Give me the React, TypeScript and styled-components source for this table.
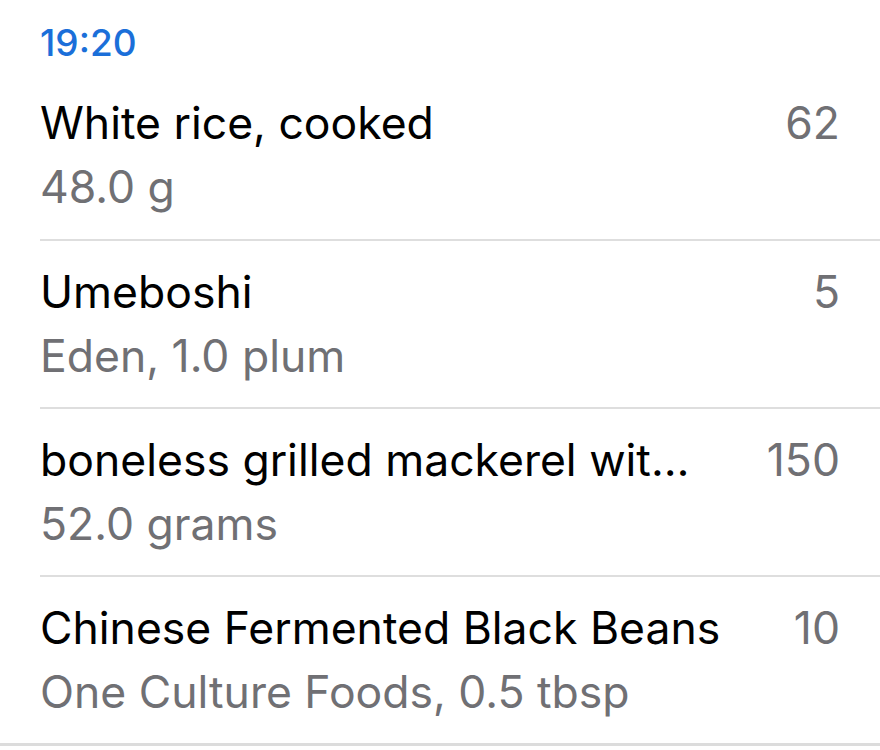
import React from "react";
import styled, { createGlobalStyle } from "styled-components";

const Global = createGlobalStyle`
  html, body { margin: 0; padding: 0; background: #ffffff; }
  body { font-family: Inter, "Noto Sans", "Liberation Sans", sans-serif; -webkit-font-smoothing: antialiased; }
`;

const Screen = styled.div`
  width: 880px;
  height: 750px;
  overflow: hidden;
  background: #ffffff;
  display: flex;
  flex-direction: column;
`;

const Section = styled.section`
  display: flex;
  flex-direction: column;
  border-bottom: 3px solid #dcdcdc;
`;

const Time = styled.div`
  padding: 21px 40px 32px;
  font-size: 37px;
  line-height: 44px;
  font-weight: 500;
  color: #1b6fd9;
`;

const List = styled.ul`
  list-style: none;
  margin: 0;
  padding: 0 0 0 40px;
`;

const Row = styled.li<{ $first?: boolean; $last?: boolean }>`
  display: flex;
  align-items: flex-start;
  justify-content: space-between;
  gap: 72px;
  padding: ${(p) => (p.$first ? "0" : "25px")} 40px ${(p) => (p.$first ? "26px" : "25px")} 0;
  border-bottom: ${(p) => (p.$last ? "none" : "2px solid #dedede")};
`;

const Info = styled.div`
  display: flex;
  flex-direction: column;
  gap: 12px;
  min-width: 0;
`;

const Title = styled.div`
  font-size: 44.5px;
  line-height: 52px;
  color: #000000;
  white-space: nowrap;
  overflow: hidden;
  text-overflow: ellipsis;
`;

const Detail = styled.div`
  font-size: 44.5px;
  line-height: 52px;
  color: #707074;
  white-space: nowrap;
`;

const Calories = styled.div`
  font-size: 44.5px;
  line-height: 52px;
  color: #707074;
  flex-shrink: 0;
`;

type Entry = { name: string; detail: string; kcal: number };

const entries: Entry[] = [
  { name: "White rice, cooked", detail: "48.0 g", kcal: 62 },
  { name: "Umeboshi", detail: "Eden, 1.0 plum", kcal: 5 },
  { name: "boneless grilled mackerel with salt", detail: "52.0 grams", kcal: 150 },
  { name: "Chinese Fermented Black Beans", detail: "One Culture Foods, 0.5 tbsp", kcal: 10 },
];

export default function App() {
  return (
    <>
      <Global />
      <Screen>
        <Section>
          <Time>19:20</Time>
          <List>
            {entries.map((e, i) => (
              <Row key={e.name} $first={i === 0} $last={i === entries.length - 1}>
                <Info>
                  <Title>{e.name}</Title>
                  <Detail>{e.detail}</Detail>
                </Info>
                <Calories>{e.kcal}</Calories>
              </Row>
            ))}
          </List>
        </Section>
      </Screen>
    </>
  );
}
